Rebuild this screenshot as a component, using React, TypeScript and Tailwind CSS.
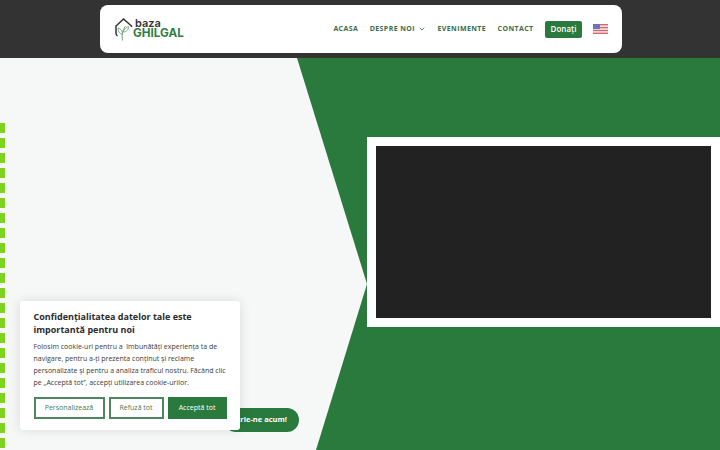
import { ChevronDown } from 'lucide-react';

const navLinks = ['ACASA', 'DESPRE NOI', 'EVENIMENTE', 'CONTACT'];
const dashes = Array.from({ length: 22 }, (_, i) => i);

function Logo() {
    return (
        <div className="flex items-start">
            <svg width="18" height="23" viewBox="0 0 18 23" fill="none">
                <path d="M2.5 18 C1.2 17.5 1 16.5 1 15 V8 L8.5 1 L16.5 8 V9" stroke="#333" strokeWidth="1.5" />
                <path d="M7.5 22.5 C6.8 18 7 13 10.5 8" stroke="#5f9a6e" strokeWidth="0.9" />
                <path d="M7.3 16.5 C4 15.5 3 13 3 10 C6.5 11 7.5 13 7.3 16.5 Z" stroke="#5f9a6e" strokeWidth="0.8" />
                <path d="M8 14 C9 11.5 11 9.5 13.5 8.5 C13.5 11.5 12 14 8 14 Z" stroke="#5f9a6e" strokeWidth="0.8" />
            </svg>
            <div className="flex flex-col font-['Inter',sans-serif]">
                <span className="ml-[2px] text-[11px] leading-[10px] font-semibold text-[#333]">baza</span>
                <span className="text-[11.7px] leading-[11px] font-bold text-[#2f7d45]">GHILGAL</span>
            </div>
        </div>
    );
}

function Flag() {
    return (
        <svg width="15" height="10" viewBox="0 0 15 10">
            <rect width="15" height="10" fill="#f3eeee" />
            <rect width="15" height="1.4" fill="#d9666f" />
            <rect y="2.9" width="15" height="1.4" fill="#d9666f" />
            <rect y="5.8" width="15" height="1.4" fill="#d9666f" />
            <rect y="8.6" width="15" height="1.4" fill="#d9666f" />
            <rect width="7" height="5" fill="#6d74b8" />
        </svg>
    );
}

export default function App() {
    return (
        <div className="relative h-[450px] w-[720px] overflow-hidden bg-[#2a7a3e] font-['Open_Sans',sans-serif]">
            <header className="flex h-[58px] bg-[#333333] pl-[100px]">
                <div className="mt-[5px] flex h-[48px] w-[522px] items-center justify-between rounded-lg bg-white pr-[14px] pl-[15px]">
                    <Logo />
                    <nav className="flex items-center">
                        {navLinks.map((link) => (
                            <a
                                key={link}
                                className="mr-[11.5px] flex items-center text-[7px] font-bold tracking-[0.4px] text-[#3d6b4a]"
                            >
                                {link}
                                {link === 'DESPRE NOI' && <ChevronDown size={8} strokeWidth={2.5} className="ml-[3px]" />}
                            </a>
                        ))}
                        <a className="flex h-[17px] w-[37px] items-center justify-center rounded-[2px] bg-[#2a7a3e] text-[8px] font-semibold text-white">
                            Donați
                        </a>
                        <span className="ml-[11px] flex">
                            <Flag />
                        </span>
                    </nav>
                </div>
            </header>

            <section className="relative flex h-[392px] items-start justify-end pt-[79px]">
                <div className="absolute inset-0 bg-[#f6f8f8] [clip-path:polygon(0_0,297px_0,367px_226px,316px_392px,0_392px)]" />

                <div className="absolute top-[65px] left-0 flex flex-col gap-[5px]">
                    {dashes.map((i) => (
                        <span key={i} className="h-[10px] w-[5px] bg-[#7ed321]" />
                    ))}
                </div>

                <div className="relative h-[190px] w-[353px] border-[9px] border-white bg-[#222222]" />

                <a className="absolute top-[350px] left-[224px] flex h-[24px] w-[75px] items-center justify-end rounded-full bg-[#2a7a3e] pr-[12px] text-[7.5px] font-bold whitespace-nowrap text-white">
                    Înscrie-ne acum!
                </a>
            </section>

            <div className="absolute top-[301px] left-[20px] h-[129px] w-[220px] rounded-[3px] bg-white px-[13.5px] pt-[10px] shadow-[0_0_12px_rgba(0,0,0,0.12)]">
                <h2 className="text-[9px] leading-[12.5px] font-bold text-[#2b2b2b]">
                    Confidențialitatea datelor tale este importantă pentru noi
                </h2>
                <p className="mt-[5px] w-[196px] text-[7px] leading-[12px] text-[#3a3a3a]">
                    Folosim cookie-uri pentru a&nbsp; îmbunătăți experiența ta de navigare, pentru a-ți prezenta conținut și reclame personalizate și pentru a analiza traficul nostru. Făcând clic pe „Acceptă tot”, accepți utilizarea cookie-urilor.
                </p>
                <div className="mt-[8px] flex gap-[4px]">
                    <button className="h-[22px] w-[71px] border-2 border-[#4e8660] text-[7px] font-medium text-[#3f7a54]">
                        Personalizează
                    </button>
                    <button className="h-[22px] w-[55px] border-2 border-[#4e8660] text-[7px] font-medium text-[#3f7a54]">
                        Refuză tot
                    </button>
                    <button className="h-[22px] w-[59px] bg-[#2a7a3e] text-[7px] font-medium text-white">
                        Acceptă tot
                    </button>
                </div>
            </div>
        </div>
    );
}
